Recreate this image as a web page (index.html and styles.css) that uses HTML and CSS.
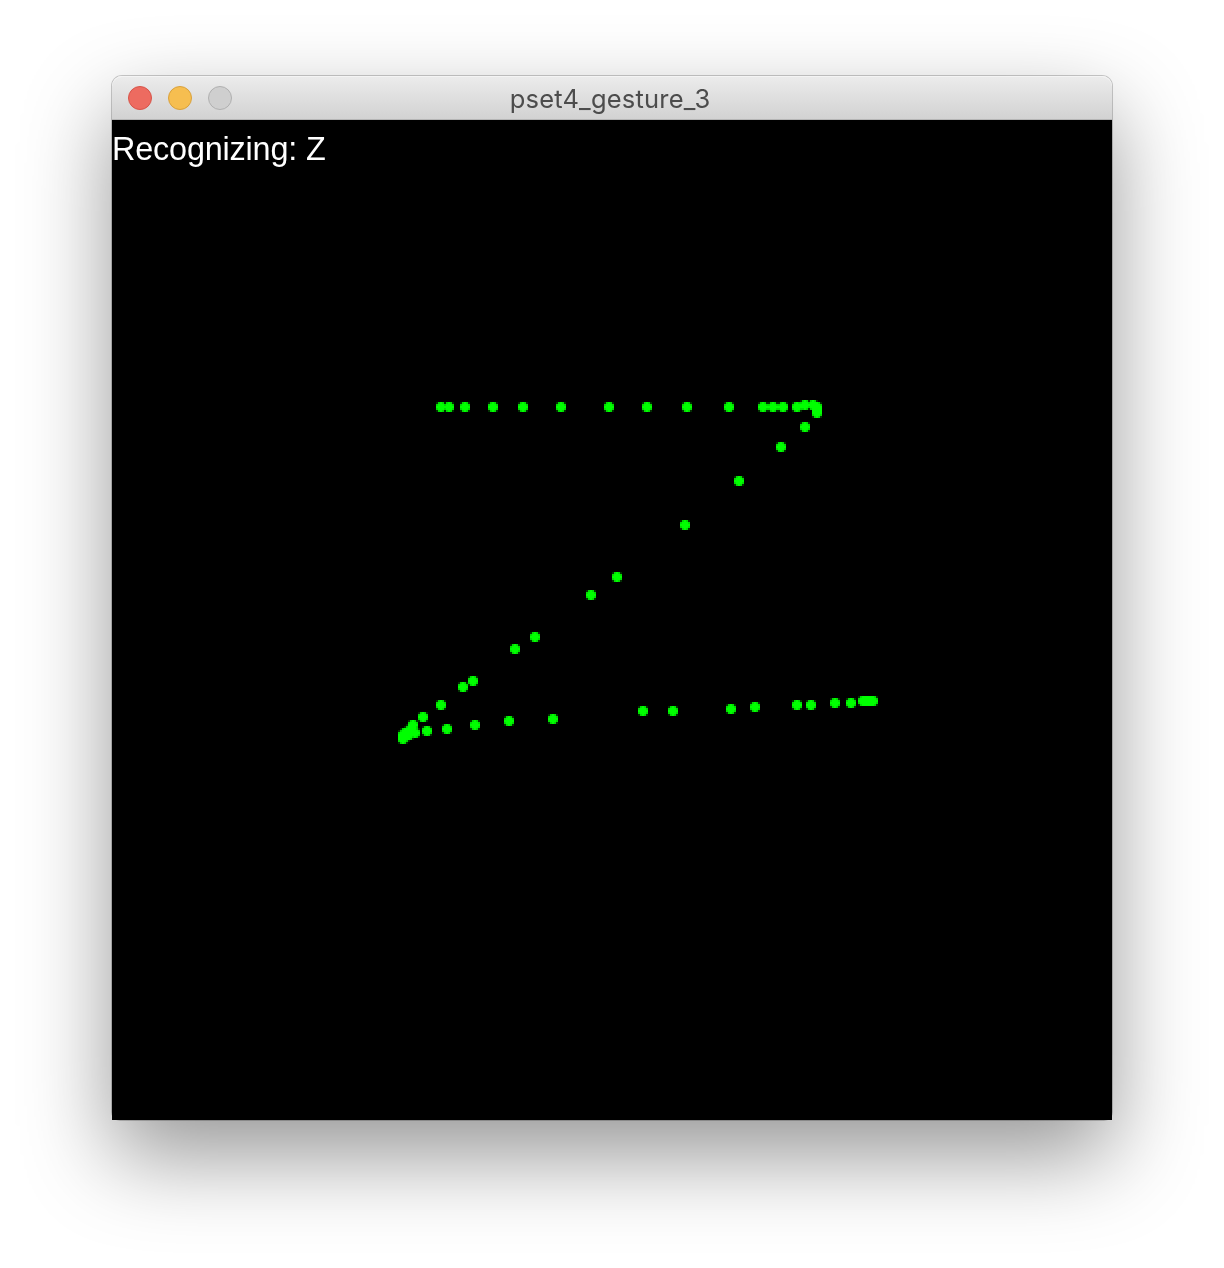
FILE: index.html
```html
<!DOCTYPE html>
<html lang="en">
<head>
<meta charset="utf-8">
<title>pset4_gesture_3</title>
<link rel="stylesheet" href="styles.css">
</head>
<body>
<main class="window">
  <header class="titlebar">
    <div class="controls">
      <span class="control close"></span>
      <span class="control minimize"></span>
      <span class="control zoom"></span>
    </div>
    <h1 class="title">pset4_gesture_3</h1>
  </header>
  <section class="sketch">
    <p class="status">Recognizing: Z</p>
    <svg class="stroke" viewBox="112 120 1000 1000" aria-hidden="true">
      <defs>
        <g id="dot" shape-rendering="crispEdges">
          <path fill="#003200" d="M-5-5H5V5H-5z"/>
          <path fill="#00dc00" d="M-3-5H3V-3H5V3H3V5H-3V3H-5V-3H-3z"/>
          <path fill="#00ff00" d="M-1-5H1V-3H3V-1H5V1H3V3H1V5H-1V3H-3V1H-5V-1H-3V-3H-1z"/>
        </g>
      </defs>
      <g id="points"></g>
    </svg>
  </section>
</main>
<script src="sketch.js"></script>
</body>
</html>
```
FILE: styles.css
```css
body {
  margin: 0;
  height: 1268px;
  overflow: hidden;
  background: #fff;
}

.window {
  width: 1000px;
  margin: 76px auto 0;
  border-radius: 10px 10px 8px 8px;
  box-shadow: 0 0 0 1px rgba(0, 0, 0, .2), 0 36px 88px rgba(0, 0, 0, .41);
}

.titlebar {
  box-sizing: border-box;
  height: 44px;
  display: grid;
  grid-template-columns: 120px 1fr 120px;
  align-items: center;
  padding: 0 16px;
  border-radius: 10px 10px 0 0;
  border-bottom: 1px solid #b5b5b5;
  background: linear-gradient(#ececec, #d2d2d2);
  box-shadow: inset 0 1px #f4f4f4;
}

.controls {
  display: flex;
  gap: 16px;
}

.control {
  box-sizing: border-box;
  width: 24px;
  height: 24px;
  border-radius: 50%;
  border: 1px solid;
}

.close { background: #ed6b60; border-color: #d75449; }
.minimize { background: #f6be50; border-color: #d9a13c; }
.zoom { background: #cfcfcf; border-color: #b0b0b0; }

.title {
  margin: 2px 4px 0 0;
  text-align: center;
  font: 400 25.5px/42px Inter, sans-serif;
  letter-spacing: .2px;
  color: #4c4c4c;
}

.sketch {
  display: grid;
  height: 1000px;
  background: #000;
}

.sketch > * {
  grid-area: 1 / 1;
}

.status {
  margin: 10px 0 0;
  font: 32.4px/38px "Liberation Sans", Arial, sans-serif;
  letter-spacing: -.18px;
  color: #fff;
}

.stroke {
  width: 1000px;
  height: 1000px;
}

.stroke use {
  mix-blend-mode: lighten;
}
```
FILE: sketch.js
```js
const points = [
  [441, 407], [449, 407], [465, 407], [493, 407], [523, 407], [561, 407],
  [609, 407], [647, 407], [687, 407], [729, 407], [763, 407], [773, 407],
  [783, 407], [797, 407], [805, 405], [813, 405], [817, 407], [817, 409],
  [817, 411], [817, 413], [805, 427], [781, 447], [739, 481], [685, 525],
  [617, 577], [591, 595], [535, 637], [515, 649], [473, 681], [463, 687],
  [441, 705], [423, 717], [413, 725], [411, 729], [409, 731], [405, 733],
  [403, 735], [403, 737], [403, 739], [405, 737], [409, 735], [411, 733],
  [415, 733], [427, 731], [447, 729], [475, 725], [509, 721], [553, 719],
  [643, 711], [673, 711], [731, 709], [755, 707], [797, 705], [811, 705],
  [835, 703], [851, 703], [863, 701], [865, 701], [867, 701], [869, 701],
  [871, 701], [873, 701]
];

const layer = document.getElementById("points");
for (const [x, y] of points) {
  const dot = document.createElementNS("http://www.w3.org/2000/svg", "use");
  dot.setAttribute("href", "#dot");
  dot.setAttribute("x", x);
  dot.setAttribute("y", y);
  layer.appendChild(dot);
}
```
